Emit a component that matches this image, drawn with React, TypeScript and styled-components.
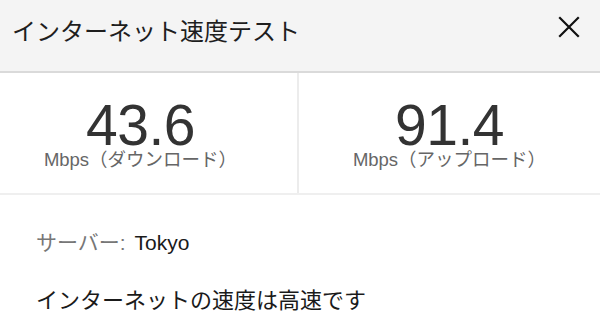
import React from 'react'
import styled, { createGlobalStyle } from 'styled-components'

const GlobalStyle = createGlobalStyle`
    html, body {
        margin: 0;
        padding: 0;
        background: #ffffff;
    }
    body {
        font-family: "Liberation Sans", "Noto Sans CJK JP", sans-serif;
        color: #222;
    }
`

const Panel = styled.div`
    width: 600px;
    height: 324px;
    display: flex;
    flex-direction: column;
    overflow: hidden;
`

const Header = styled.div`
    height: 73px;
    box-sizing: border-box;
    background: #f4f4f4;
    border-bottom: 2px solid #dadada;
    display: flex;
    align-items: flex-start;
    justify-content: space-between;
    padding: 0 20px 0 12px;
`

const Title = styled.h1`
    margin: 18px 0 0;
    font-size: 24px;
    font-weight: normal;
    color: #1e1e1e;
    line-height: 1.15;
`

const CloseButton = styled.button`
    border: none;
    background: none;
    padding: 0;
    margin-top: 16px;
    width: 22px;
    height: 22px;
    display: flex;
    cursor: pointer;
`

const Stats = styled.div`
    display: grid;
    grid-template-columns: 299px 1fr;
    height: 122px;
    box-sizing: border-box;
    border-bottom: 2px solid #efefef;
`

const Cell = styled.div<{ $divider?: boolean; $shift?: number }>`
    display: flex;
    flex-direction: column;
    align-items: center;
    justify-content: flex-start;
    padding-top: 28px;
    border-right: ${p => (p.$divider ? '2px solid #ececec' : 'none')};
    padding-right: ${p => p.$shift || 0}px;
`

const Value = styled.div`
    font-size: 57px;
    line-height: 48px;
    color: #333;
    letter-spacing: -0.5px;
`

const Unit = styled.div`
    font-size: 18.5px;
    line-height: 22px;
    color: #666;
`

const Info = styled.div`
    padding: 36px 36px 0;
    display: flex;
    flex-direction: column;
    gap: 34px;
`

const Line = styled.div<{ $size: number }>`
    font-size: ${p => p.$size}px;
    line-height: 24px;
    color: #1a1a1a;
`

const Muted = styled.span`
    color: #777;
    margin-right: 3px;
`

const CloseIcon = () => (
    <svg width="22" height="22" viewBox="0 0 22 22">
        <path d="M2 2 L20 20 M20 2 L2 20" stroke="#111" strokeWidth="2.2" strokeLinecap="square" />
    </svg>
)

const stats = [
    { value: '43.6', label: 'Mbps（ダウンロード）' },
    { value: '91.4', label: 'Mbps（アップロード）' },
]

export default function App() {
    return (
        <Panel>
            <GlobalStyle />
            <Header>
                <Title>インターネット速度テスト</Title>
                <CloseButton aria-label="閉じる"><CloseIcon /></CloseButton>
            </Header>
            <Stats>
                {stats.map((s, i) => (
                    <Cell key={s.label} $divider={i === 0} $shift={i === 0 ? 16 : 0}>
                        <Value>{s.value}</Value>
                        <Unit>{s.label}</Unit>
                    </Cell>
                ))}
            </Stats>
            <Info>
                <Line $size={21}><Muted>サーバー:</Muted> Tokyo</Line>
                <Line $size={22}>インターネットの速度は高速です</Line>
            </Info>
        </Panel>
    )
}
